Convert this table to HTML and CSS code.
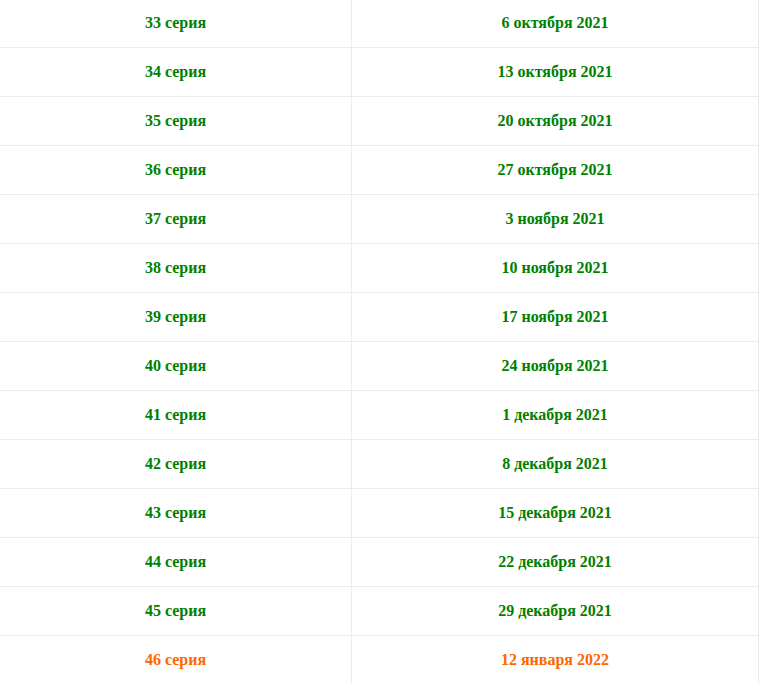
FILE: index.html
```html
<!DOCTYPE html>
<html lang="ru">
<head>
<meta charset="utf-8">
<title>Даты выхода серий</title>
<link rel="stylesheet" href="styles.css">
</head>
<body>
<table class="schedule">
  <colgroup><col class="col-ep"><col class="col-date"></colgroup>
  <tbody>
    <tr><td>33 серия</td><td>6 октября 2021</td></tr>
    <tr><td>34 серия</td><td>13 октября 2021</td></tr>
    <tr><td>35 серия</td><td>20 октября 2021</td></tr>
    <tr><td>36 серия</td><td>27 октября 2021</td></tr>
    <tr><td>37 серия</td><td>3 ноября 2021</td></tr>
    <tr><td>38 серия</td><td>10 ноября 2021</td></tr>
    <tr><td>39 серия</td><td>17 ноября 2021</td></tr>
    <tr><td>40 серия</td><td>24 ноября 2021</td></tr>
    <tr><td>41 серия</td><td>1 декабря 2021</td></tr>
    <tr><td>42 серия</td><td>8 декабря 2021</td></tr>
    <tr><td>43 серия</td><td>15 декабря 2021</td></tr>
    <tr><td>44 серия</td><td>22 декабря 2021</td></tr>
    <tr><td>45 серия</td><td>29 декабря 2021</td></tr>
    <tr class="next"><td>46 серия</td><td>12 января 2022</td></tr>
  </tbody>
</table>
</body>
</html>
```
FILE: styles.css
```css
html, body {
  margin: 0;
  padding: 0;
  background: #fff;
}
.schedule {
  width: 759px;
  table-layout: fixed;
  border-collapse: separate;
  border-spacing: 0;
  margin-top: -1px;
  font-family: "Liberation Serif", "Times New Roman", serif;
  font-weight: bold;
  font-size: 16px;
  color: #008000;
}
.col-ep { width: 352px; }
.col-date { width: 407px; }
.schedule td {
  height: 48px;
  padding: 0;
  text-align: center;
  vertical-align: middle;
  border-bottom: 1px solid #ececec;
  border-right: 1px solid #ececec;
  box-sizing: content-box;
}
.schedule tr.next td {
  color: #ff6600;
}
```
